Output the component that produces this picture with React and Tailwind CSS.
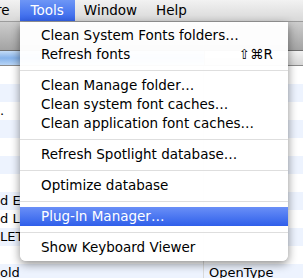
import React from "react";

// Tools menu entries (sep = separator line)
const menuItems = [
  { label: "Clean System Fonts folders…" },
  { label: "Refresh fonts", shortcut: "⇧⌘R" },
  { sep: true },
  { label: "Clean Manage folder…" },
  { label: "Clean system font caches…" },
  { label: "Clean application font caches…" },
  { sep: true },
  { label: "Refresh Spotlight database…" },
  { sep: true },
  { label: "Optimize database" },
  { sep: true },
  { label: "Plug-In Manager…", active: true },
  { sep: true },
  { label: "Show Keyboard Viewer" },
];

// Font list rows behind the menu (only the visible edges matter)
const rows = [
  { name: "", kind: "" },
  { name: "", kind: "" },
  { name: ".", kind: "" },
  { name: "", kind: "" },
  { name: "", kind: "" },
  { name: "", kind: "" },
  { name: "", kind: "" },
  { name: "d Extended", kind: "" },
  { name: "d Light", kind: "" },
  { name: "LET Plain", kind: "" },
  { name: "", kind: "" },
  { name: "old", kind: "OpenType" },
];

const MenuBar = () => (
  <div className="h-[22px] flex items-center bg-gradient-to-b from-[#f2f2f2] to-[#d8d8d8] border-b border-[#9c9c9c] text-[13.5px] text-black leading-[21px]">
    <span className="ml-[-4px] pr-[10px]">re</span>
    <span className="px-[11px] h-full flex items-center text-white bg-gradient-to-b from-[#6e96f6] to-[#3563ea]">
      Tools
    </span>
    <span className="px-[9px]">Window</span>
    <span className="px-[10px]">Help</span>
  </div>
);

const FontTable = () => (
  <div className="flex flex-col">
    {/* Window toolbar */}
    <div className="h-[28px] bg-gradient-to-b from-[#cdcdcd] to-[#a3a3a3]" />
    {/* Column headers */}
    <div className="h-[16px] flex border-t border-[#6f6f6f] border-b border-b-[#8a8a8a]">
      <div className="w-[204px] bg-gradient-to-b from-[#c3dbf6] via-[#86b3eb] to-[#b7d4f5]" />
      <div className="flex-1 bg-gradient-to-b from-[#f2f2f2] to-[#d6d6d6] border-l border-[#a9a9a9]" />
    </div>
    {rows.map((row, i) => (
      <div
        key={i}
        className={`h-[18px] flex text-[13px] leading-[18px] text-black ${
          i % 2 === 1 ? "bg-[#edf3fe]" : "bg-white"
        }`}
      >
        <div className="w-[204px] border-r border-[#dadada]">
          <div
            className={`whitespace-nowrap overflow-hidden ${
              row.kind ? "" : "max-w-[20px]"
            }`}
          >
            {row.name}
          </div>
        </div>
        <div className="flex-1 pl-[5px] whitespace-nowrap overflow-hidden">
          {row.kind}
        </div>
      </div>
    ))}
  </div>
);

const ToolsMenu = () => (
  <div className="absolute left-[20px] top-[22px] w-[268px] py-[4px] bg-white/[0.97] rounded-b-[6px] shadow-[0_3px_10px_rgba(0,0,0,0.45)] text-[13.5px] text-black">
    {menuItems.map((item, i) =>
      item.sep ? (
        <div key={i} className="h-[12px] flex items-center">
          <div className="h-px w-full bg-[#dedede]" />
        </div>
      ) : (
        <div
          key={i}
          className={`h-[19px] leading-[19px] flex justify-between pl-[21px] pr-[15px] whitespace-nowrap ${
            item.active
              ? "bg-gradient-to-b from-[#6a8ff7] to-[#2f5eea] text-white"
              : ""
          }`}
        >
          <span>{item.label}</span>
          {item.shortcut && <span>{item.shortcut}</span>}
        </div>
      )
    )}
  </div>
);

const App = () => {
  return (
    <div className="relative w-[303px] h-[278px] overflow-hidden bg-white font-['DejaVu_Sans',sans-serif]">
      <MenuBar />
      <FontTable />
      <ToolsMenu />
    </div>
  );
};

export default App;
